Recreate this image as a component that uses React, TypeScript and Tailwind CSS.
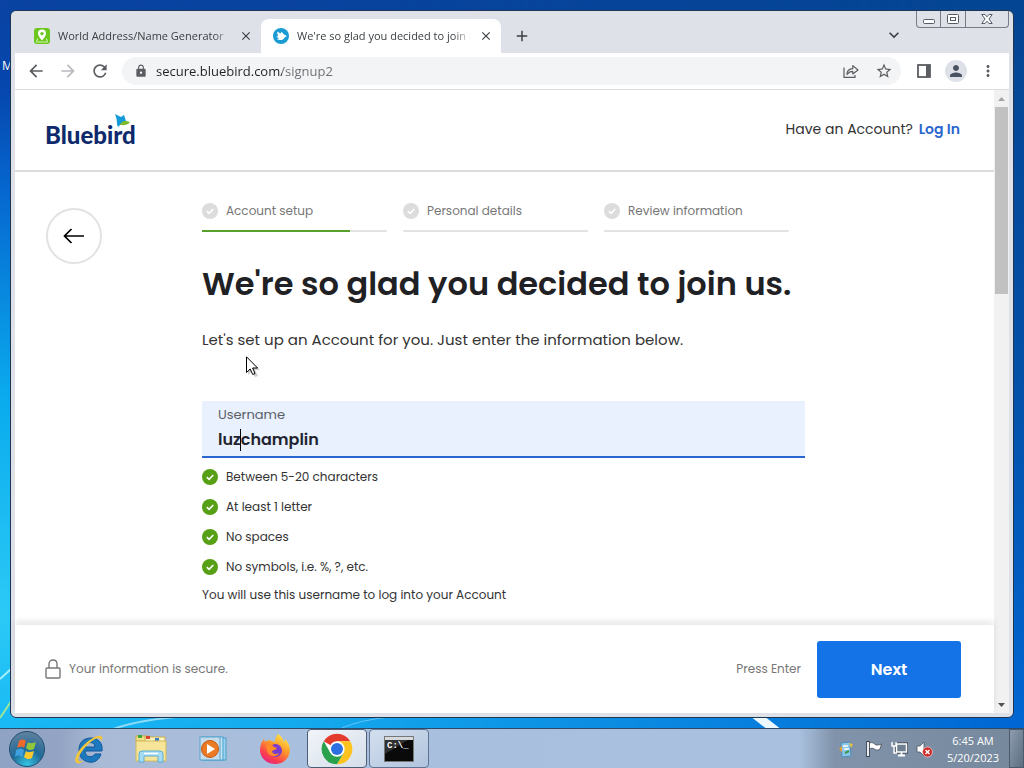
import React from 'react';
import {
  MdAdd,
  MdArrowBack,
  MdArrowForward,
  MdClose,
  MdKeyboardArrowDown,
  MdLock,
  MdMoreVert,
  MdPerson,
  MdRefresh,
  MdStarBorder,
} from 'react-icons/md';

const RULES = [
  'Between 5-20 characters',
  'At least 1 letter',
  'No spaces',
  'No symbols, i.e. %, ?, etc.',
];

const STEPS = [
  { label: 'Account setup', progress: 80 },
  { label: 'Personal details', progress: 0 },
  { label: 'Review information', progress: 0 },
];

const Wallpaper: React.FC = () => (
  <svg
    className="absolute inset-0 w-full h-full"
    viewBox="0 0 1024 768"
    preserveAspectRatio="none"
    aria-hidden="true"
  >
    <defs>
      <linearGradient id="skyLeft" x1="0" y1="0" x2="0" y2="1">
        <stop offset="0" stopColor="#0a43a2" />
        <stop offset="0.12" stopColor="#0648ae" />
        <stop offset="0.25" stopColor="#0668d0" />
        <stop offset="0.52" stopColor="#0bacee" />
        <stop offset="0.8" stopColor="#2ccaf6" />
        <stop offset="1" stopColor="#12b4f4" />
      </linearGradient>
      <linearGradient id="skyRight" x1="0" y1="0" x2="0" y2="1">
        <stop offset="0" stopColor="#044592" />
        <stop offset="0.5" stopColor="#0450a8" />
        <stop offset="1" stopColor="#0068d8" />
      </linearGradient>
      <linearGradient id="skyFade" x1="0" y1="0" x2="1" y2="0">
        <stop offset="0" stopColor="#000" />
        <stop offset="0.3" stopColor="#333" />
        <stop offset="1" stopColor="#fff" />
      </linearGradient>
      <mask id="skyMask">
        <rect width="1024" height="768" fill="url(#skyFade)" />
      </mask>
    </defs>
    <rect width="1024" height="768" fill="url(#skyLeft)" />
    <rect width="1024" height="768" fill="url(#skyRight)" mask="url(#skyMask)" />
    <path d="M0 679 L12 668" stroke="#a8ecff" strokeWidth="2" />
    <path d="M0 718 L12 700" stroke="#9be89a" strokeWidth="2" />
    <path d="M110 730 Q140 719 190 716" stroke="#8fdcf8" strokeWidth="2" fill="none" />
    <path d="M342 728 Q360 720 390 717" stroke="#5fc4fb" strokeWidth="1" fill="none" />
    <path d="M750 716 L764 716 L782 730 L768 730 Z" fill="#eef8ff" />
  </svg>
);

const CheckBadge: React.FC<{ done?: boolean }> = ({ done }) => (
  <svg className="w-4 h-4 shrink-0" viewBox="0 0 16 16" aria-hidden="true">
    <circle cx="8" cy="8" r="8" fill={done ? '#57a016' : '#dcdcdc'} />
    <path d="M4.8 8.2 L7.1 10.3 L11.3 6" fill="none" stroke="#fff" strokeWidth="1.6" />
  </svg>
);

const PinFavicon: React.FC = () => (
  <svg className="w-4 h-4 shrink-0" viewBox="0 0 16 16" aria-hidden="true">
    <rect width="16" height="16" rx="3" fill="#6cc81e" />
    <path d="M3.5 10.5 L2.5 14 H13.5 L12.5 10.5" fill="none" stroke="#d9f5bd" strokeWidth="1" />
    <path d="M8 1.6a4 4 0 0 0-4 4c0 3 4 6.8 4 6.8s4-3.8 4-6.8a4 4 0 0 0-4-4z" fill="#fff" />
    <circle cx="8" cy="5.6" r="1.7" fill="#6cc81e" />
  </svg>
);

const BirdFavicon: React.FC = () => (
  <svg className="w-4 h-4 shrink-0" viewBox="0 0 16 16" aria-hidden="true">
    <circle cx="8" cy="8" r="8" fill="#1a9bd4" />
    <path d="M4 3.4 L7.5 5.6 L8.6 3.8 L11 6.4 L14 8 L11.8 9.2 C11 11.8 8 12.6 4 11.6 L6 10 L3.2 9 L5 8 Z" fill="#fff" />
  </svg>
);

interface TabProps {
  title: string;
  icon: React.ReactNode;
  active?: boolean;
}

const Tab: React.FC<TabProps> = ({ title, icon, active }) => (
  <div
    className={
      active
        ? 'flex items-center w-60 h-[34px] pl-3 pr-2 rounded-t-lg bg-white'
        : 'flex items-center w-[246px] h-[34px] pl-[19px] pr-2'
    }
  >
    {icon}
    <button
      role="tab"
      aria-selected={!!active}
      className="flex-1 min-w-0 ml-2 mr-2 whitespace-nowrap text-left text-[11px] leading-4 text-[#3c4043] mask-r-from-90% mask-r-to-100%"
    >
      {title}
    </button>
    <button aria-label="Close tab" className="text-[#3c4043]">
      <MdClose size={14} />
    </button>
  </div>
);

const CaptionButtons: React.FC = () => (
  <div className="flex self-start h-[17px] border border-t-0 border-[#767c88] rounded-b-sm text-[#555c68]">
    <button aria-label="Minimize" className="flex items-center justify-center w-6 border-r border-[#767c88]">
      <svg width="12" height="12" viewBox="0 0 12 12" fill="#fff" stroke="currentColor">
        <rect x="0.5" y="6.5" width="11" height="4" rx="1" />
      </svg>
    </button>
    <button aria-label="Maximize" className="flex items-center justify-center w-[25px] border-r border-[#767c88]">
      <svg width="12" height="12" viewBox="0 0 12 12" fill="#fff" stroke="currentColor">
        <rect x="0.5" y="1.5" width="11" height="9" rx="1" />
        <rect x="3.5" y="4.5" width="5" height="3" />
      </svg>
    </button>
    <button aria-label="Close" className="flex items-center justify-center w-[42px]">
      <svg width="12" height="12" viewBox="0 0 12 12" fill="#fff" stroke="currentColor">
        <path d="M.8 1.5h3.2l2 2.3 2-2.3h3.2L8 6l3.2 4.5H8L6 8.2l-2 2.3H.8L4 6z" />
      </svg>
    </button>
  </div>
);

const TabStrip: React.FC = () => (
  <div className="flex items-end h-[42px] shrink-0 bg-[#dee1e8]">
    <div className="flex" role="tablist">
      <Tab title="World Address/Name Generator" icon={<PinFavicon />} />
      <Tab title="We're so glad you decided to join us" icon={<BirdFavicon />} active />
    </div>
    <button aria-label="New tab" className="ml-3 mb-2 text-[#3c4043]">
      <MdAdd size={18} />
    </button>
    <button aria-label="Search tabs" className="ml-auto mr-3 mb-2 text-[#3c4043]">
      <MdKeyboardArrowDown size={20} />
    </button>
    <CaptionButtons />
  </div>
);

const Toolbar: React.FC = () => (
  <div className="flex items-center h-[37px] shrink-0 pl-[11px] pr-3 bg-white border-b border-[#dcdde0] text-[#5a5d61]">
    <div className="flex gap-3">
      <button aria-label="Back"><MdArrowBack size={20} /></button>
      <button aria-label="Forward" className="text-[#b9bbbe]"><MdArrowForward size={20} /></button>
      <button aria-label="Reload"><MdRefresh size={20} /></button>
    </div>
    <div className="flex flex-1 items-center h-7 ml-3 mr-2 pl-3 pr-2 rounded-full bg-[#f3f4f5]">
      <MdLock size={14} />
      <input
        aria-label="Address"
        defaultValue="secure.bluebird.com/signup2"
        className="flex-1 min-w-0 ml-2 pt-px text-[13px] text-transparent bg-clip-text bg-[linear-gradient(90deg,#202124_126px,#6a6d72_126px)] outline-none"
      />
      <button aria-label="Share" className="mr-4">
        <svg width="16" height="16" viewBox="0 0 16 16" fill="none" stroke="currentColor" strokeWidth="1.2">
          <path d="M1 4.500 V14.400 H12 V12" />
          <path d="M4 11.500 C4 7.500 6.500 5.800 9.800 5.600 V2.600 L15 7 L9.800 11 V8.300 C7 8.300 5.500 9.300 4 11.500 Z" strokeLinejoin="round" />
        </svg>
      </button>
      <button aria-label="Bookmark this page"><MdStarBorder size={18} /></button>
    </div>
    <button aria-label="Side panel" className="ml-2">
      <svg width="14" height="14" viewBox="0 0 14 14">
        <rect x="1" y="1" width="12" height="12" fill="#fff" stroke="currentColor" strokeWidth="1.8" />
        <rect x="9" y="1" width="4" height="12" fill="currentColor" />
      </svg>
    </button>
    <button aria-label="Profile" className="flex items-center justify-center w-[22px] h-[22px] ml-3.5 mr-3 rounded-full bg-[#dee1e8] text-[#4a5261]">
      <MdPerson size={18} />
    </button>
    <button aria-label="Menu"><MdMoreVert size={18} /></button>
  </div>
);

const SiteHeader: React.FC = () => (
  <header className="flex items-center justify-between h-[82px] shrink-0 pl-[30px] pr-[34px] border-b-2 border-[#dcdcdc]">
    <a href="#" className="relative pt-2.5 font-['Lato'] font-black text-2xl leading-8 text-[#0e2a6c]">
      Bluebird
      <svg className="absolute right-1 top-1 w-5 h-4" viewBox="0 0 20 16" aria-hidden="true">
        <path d="M3 1 L9 4 L12 2 L14 8 L8 12 L6 14 C4 10 6 8 3 1 Z" fill="#129bd8" />
        <path d="M8 12 C9 8 13 7 18 9 C16 12 12 12.500 8 12 Z" fill="#7fb92c" />
      </svg>
    </a>
    <p className="pb-0.5 text-sm text-[#333]">
      Have an Account? <a href="#" className="ml-0.5 font-semibold text-[#2a66cf]">Log In</a>
    </p>
  </header>
);

const Stepper: React.FC = () => (
  <ol className="flex">
    {STEPS.map((step) => (
      <li key={step.label} className="flex-1 pr-4">
        <div className="flex items-center gap-2 h-5 text-xs text-[#777]">
          <CheckBadge />
          {step.label}
        </div>
        <div className="h-0.5 mt-[9px] rounded-full bg-[#e2e2e2]">
          <div className="h-0.5 bg-[#57a02c]" style={{ width: `${step.progress}%` }} />
        </div>
      </li>
    ))}
  </ol>
);

const SignupForm: React.FC = () => (
  <form id="signup" className="w-full max-w-[603px]">
    <Stepper />
    <h1 className="mt-7 text-[32px] leading-12 font-semibold whitespace-nowrap text-[#1f2124]">
      We're so glad you decided to join us.
    </h1>
    <p className="mt-5 text-[15px] leading-6 text-[#333]">
      Let's set up an Account for you. Just enter the information below.
    </p>
    <div className="relative h-[57px] mt-[49px] px-4 pt-1 border-b-2 border-[#2a66cf] bg-[#e8f1fd]">
      <label htmlFor="username" className="block text-[13px] leading-5 text-[#5a6068]">Username</label>
      <input
        id="username"
        defaultValue="luzchamplin"
        className="block w-full h-7 bg-transparent text-base font-semibold text-[#1f2430] outline-none"
      />
      <span className="absolute left-[38px] top-7 w-px h-[22px] bg-black" />
    </div>
    <ul className="mt-1 text-xs text-[#333]">
      {RULES.map((rule) => (
        <li key={rule} className="flex items-center gap-2 h-[30px]">
          <CheckBadge done />
          {rule}
        </li>
      ))}
    </ul>
    <p className="mt-[3px] text-xs leading-5 text-[#333]">
      You will use this username to log into your Account
    </p>
  </form>
);

const SiteFooter: React.FC = () => (
  <footer className="relative flex items-center h-[88px] shrink-0 pl-[30px] pr-[33px] bg-white shadow-[0_-4px_6px_rgba(0,0,0,0.09)] text-xs text-[#777]">
    <svg className="mr-2" width="16" height="20" viewBox="0 0 16 20" fill="none" stroke="#777" strokeWidth="1.4" aria-hidden="true">
      <rect x="1" y="9" width="14" height="10" rx="1" />
      <path d="M4 9 V5 C4 -0.300 12 -0.300 12 5 V9" />
    </svg>
    Your information is secure.
    <span className="ml-auto mr-4">Press Enter</span>
    <button type="submit" form="signup" className="w-36 h-[57px] pt-px rounded-[3px] bg-[#1473e6] text-base font-semibold text-white">
      Next
    </button>
  </footer>
);

const Scrollbar: React.FC = () => (
  <div className="flex flex-col w-[15px] shrink-0 items-center bg-[#f1f1f1]" aria-hidden="true">
    <svg width="15" height="17" viewBox="0 0 15 17">
      <path d="M4 11 L7.500 7 L11 11 Z" fill="#a3a3a3" />
    </svg>
    <div className="w-[13px] h-[30%] bg-[#c1c1c1]" />
    <svg className="mt-auto" width="15" height="17" viewBox="0 0 15 17">
      <path d="M4 7 L7.500 11 L11 7 Z" fill="#505050" />
    </svg>
  </div>
);

const SignupPage: React.FC = () => (
  <div className="flex flex-1 min-h-0 bg-white">
    <div className="flex flex-col flex-1 min-w-0 font-['Poppins','Inter',sans-serif]">
      <SiteHeader />
      <main className="flex flex-1 min-h-0 pt-[29px] pl-[31px] gap-[100px] overflow-hidden">
        <button aria-label="Go back" className="flex items-center justify-center w-14 h-14 mt-[7px] shrink-0 rounded-full border-2 border-[#e2e2e2]">
          <svg width="22" height="16" viewBox="0 0 22 16" fill="none" stroke="#000" strokeWidth="1.7">
            <path d="M21 8 H1.500 M8.500 1 L1.500 8 L8.500 15" />
          </svg>
        </button>
        <SignupForm />
      </main>
      <SiteFooter />
    </div>
    <Scrollbar />
  </div>
);

const ChromeLogo: React.FC = () => (
  <svg width="32" height="32" viewBox="0 0 48 48" aria-hidden="true">
    <circle cx="24" cy="24" r="23" fill="#fff" />
    <path d="M24 24 L4.080 12.500 A23 23 0 0 1 43.920 12.500 H24 Z" fill="#e33b2e" />
    <path d="M43.920 12.500 A23 23 0 0 1 24 47 L33.960 29.750 L24 12.500 Z" fill="#fcc31e" />
    <path d="M4.080 12.500 A23 23 0 0 0 24 47 L33.960 29.750 L24 24 L14.040 29.750 Z" fill="#2aa14c" />
    <circle cx="24" cy="24" r="11.500" fill="#fff" />
    <circle cx="24" cy="24" r="9" fill="#2c6fe0" />
  </svg>
);

const FirefoxLogo: React.FC = () => (
  <svg width="32" height="32" viewBox="0 0 32 32" aria-hidden="true">
    <defs>
      <linearGradient id="fox" x1="0.8" y1="0" x2="0.2" y2="1">
        <stop offset="0" stopColor="#fff04a" />
        <stop offset="0.4" stopColor="#ff9a2a" />
        <stop offset="0.75" stopColor="#fb3f4e" />
        <stop offset="1" stopColor="#e0208a" />
      </linearGradient>
    </defs>
    <path d="M19 1 C23 4 24 6 25 9 C26 8 26 7 26 6 C31 11 32 17 30 22 C27 29 21 31 16 31 C8 31 1 25 1 17 C1 12 3 8 5 6 L6 9 C7 8 9 7 10 7 C12 8 14 8 16 9 C16 6 17 3 19 1 Z" fill="url(#fox)" />
    <circle cx="16.500" cy="17.500" r="6.500" fill="#7a3bd0" />
    <path d="M7 12 C10 10 13 11 15 14 L18 15 C17 17 14 17 13 18 C13 21 17 22 20 20 C18 25 10 24 8 18 Z" fill="#ff8a2a" />
  </svg>
);

const ExplorerLogo: React.FC = () => (
  <svg width="32" height="30" viewBox="0 0 32 30" aria-hidden="true">
    <rect x="1" y="2" width="12" height="5" fill="#f2df86" stroke="#c9ad4e" />
    <rect x="10" y="3" width="20" height="5" fill="#fbf2c0" stroke="#c9ad4e" />
    <rect x="3" y="1" width="4" height="3" fill="#3ba53a" />
    <rect x="11" y="2" width="4" height="3" fill="#d9462c" />
    <rect x="20" y="4" width="4" height="3" fill="#3d80c4" />
    <path d="M1 7 H31 V27 H1 Z" fill="#f6e598" stroke="#d2b85c" />
    <path d="M4 28 V20 Q4 17 7 17 H25 Q28 17 28 20 V28 H23 V22 H9 V28 Z" fill="#a5dcf3" stroke="#5cacd4" />
    <path d="M9 19.500 H23" stroke="#fff" strokeWidth="1.500" />
  </svg>
);

const InternetExplorerLogo: React.FC = () => (
  <svg width="32" height="32" viewBox="0 0 32 32" aria-hidden="true">
    <path d="M29 18 H12 C12 25 20 25 22 21 H28 C26 28 20 30 16 29 C9 28 6 23 6 17 C6 9 11 5 18 5 C26 5 30 11 29 18 Z M12 14 H22 C22 8 13 8 12 14 Z" fill="#1c78bf" fillRule="evenodd" stroke="#125996" />
    <path d="M4 30 C-1 28 5 17 13 10 C20 4 27 1 29 4 C30 6 29 7 28 8 C28 5 25 4 19 8 C11 14 3 25 6 28 C7 29 9 28 11 27 C8 30 6 31 4 30 Z" fill="#f2c53a" />
  </svg>
);

const MediaPlayerLogo: React.FC = () => (
  <svg width="28" height="28" viewBox="0 0 28 28" aria-hidden="true">
    <rect x="5" y="3" width="22" height="22" fill="#9cd3ee" stroke="#4b9fcb" />
    <rect x="3" y="2" width="21" height="23" fill="#bfe3f4" stroke="#4b9fcb" />
    <rect x="1" y="2" width="20" height="23" fill="#c6dcec" stroke="#5ba5cc" />
    <circle cx="11" cy="14" r="8.500" fill="#ec7a24" stroke="#c55b12" />
    <path d="M8 9 L16 14 L8 19 Z" fill="#fff" />
  </svg>
);

const CommandPromptLogo: React.FC = () => (
  <svg width="30" height="26" viewBox="0 0 30 26" aria-hidden="true">
    <rect x="0.500" y="0.500" width="29" height="25" fill="#0a0a0a" stroke="#777" />
    <rect x="1" y="1" width="28" height="3" fill="#d5d9de" />
    <path d="M1 4 H24 L1 18 Z" fill="#303030" />
    <text x="3" y="12" fontSize="9" fontWeight="bold" fontFamily="Liberation Mono, monospace" fill="#fff">C:\_</text>
  </svg>
);

const StartOrb: React.FC = () => (
  <svg width="38" height="38" viewBox="0 0 38 38" aria-hidden="true">
    <defs>
      <radialGradient id="orb" cx="0.5" cy="0.95" r="0.9">
        <stop offset="0" stopColor="#35c6e6" />
        <stop offset="0.5" stopColor="#1f6a98" />
        <stop offset="1" stopColor="#5d7f9e" />
      </radialGradient>
    </defs>
    <circle cx="19" cy="19" r="17.500" fill="url(#orb)" stroke="#23506f" />
    <path d="M11 11 C13 9 16 9 18 11 L16 18 C14 16 11 17 9 18 Z" fill="#ee6a2c" />
    <path d="M20 12 C22 14 26 13 28 12 L26 19 C23 21 20 20 18 18 Z" fill="#8fc63c" />
    <path d="M8 20 C11 18 14 18 16 20 L14 27 C12 25 9 25 7 27 Z" fill="#3fa0e0" />
    <path d="M18 21 C20 23 23 22 26 21 L24 28 C21 30 18 29 16 27 Z" fill="#fbc92e" />
  </svg>
);

const TASKS = [
  { name: 'Internet Explorer', logo: <InternetExplorerLogo /> },
  { name: 'Windows Explorer', logo: <ExplorerLogo /> },
  { name: 'Windows Media Player', logo: <MediaPlayerLogo /> },
  { name: 'Firefox', logo: <FirefoxLogo /> },
  { name: 'Google Chrome', logo: <ChromeLogo />, state: 'active' },
  { name: 'Command Prompt', logo: <CommandPromptLogo />, state: 'open' },
];

const taskStyle = (state?: string) => {
  if (state === 'active') {
    return 'flex items-center justify-center w-[60px] h-full rounded-sm border border-[#4d5d75] bg-linear-to-br from-[#f2f5f9] to-[#d5deea]';
  }
  if (state === 'open') {
    return 'flex items-center justify-center w-[60px] h-full rounded-sm border border-[#5f7390] bg-linear-to-br from-[#d3dfee] to-[#b1c4de]';
  }
  return 'flex items-center justify-center w-[60px] h-full';
};

const Tray: React.FC = () => (
  <div className="flex items-center gap-2 text-white">
    <svg width="16" height="18" viewBox="0 0 16 18" aria-hidden="true">
      <path d="M3 3 L12 2 L13 16 L4 17 Z" fill="#8cc6e8" stroke="#4d8fbd" />
      <path d="M1 9 L4 6 V12 Z" fill="#e8a030" />
      <path d="M11 3 L15 4 L13 8 Z" fill="#e8c040" />
      <path d="M5 6 H10 M6 9 H11" stroke="#fff" strokeWidth="1.500" />
      <path d="M7 13 L11 11" stroke="#3a9a50" strokeWidth="2" />
    </svg>
    <svg className="ml-1" width="17" height="18" viewBox="0 0 17 18" aria-hidden="true">
      <path d="M2 1 V17" stroke="#333c48" strokeWidth="3.500" />
      <path d="M2 2 V16" stroke="#fff" strokeWidth="1.800" />
      <path d="M3.500 3 C6 2 8 3 9 4.500 C11 5.500 13 5 15.500 4 L14 9 C12 10.500 10 10.500 8.500 9 C7 8 5 8 3.500 9 Z" fill="#fff" stroke="#333c48" strokeWidth="0.700" />
    </svg>
    <svg width="17" height="18" viewBox="0 0 17 18" fill="none" stroke="#fff" aria-hidden="true">
      <rect x="5.500" y="4" width="10" height="8" stroke="#333c48" strokeWidth="3" />
      <rect x="5.500" y="4" width="10" height="8" fill="#6e7f92" strokeWidth="1.500" />
      <path d="M7 15.500 H14 M10.500 12 V15" strokeWidth="1.800" />
      <path d="M1 2 V6 H5 V2 M3 6 V13 H6" strokeWidth="1.400" />
    </svg>
    <svg width="17" height="18" viewBox="0 0 17 18" aria-hidden="true">
      <path d="M1 6 H4 L8 2 V16 L4 12 H1 Z" fill="#fff" stroke="#4a5563" strokeWidth="0.800" />
      <circle cx="11.500" cy="12" r="5" fill="#cf2a2a" stroke="#f3d5d5" strokeWidth="0.700" />
      <path d="M9.500 10 L13.500 14 M13.500 10 L9.500 14" stroke="#fff" strokeWidth="1.500" />
    </svg>
  </div>
);

const Taskbar: React.FC = () => (
  <div className="relative flex items-center h-10 shrink-0 border-t border-[#2c4a68] bg-[linear-gradient(90deg,#8fa3c4_0,#93a4c4_60px,#a9bad6_100px,#a8c0de_300px,#a9c1df_calc(100%-225px),#8093aa_calc(100%-190px),#76889c_100%)]">
    <button aria-label="Start" className="flex items-center justify-center w-[51px] ml-px mr-[7px]">
      <StartOrb />
    </button>
    <div className="flex gap-0.5 h-full">
      {TASKS.map((task) => (
        <button key={task.name} aria-label={task.name} className={taskStyle(task.state)}>
          {task.logo}
        </button>
      ))}
    </div>
    <div className="flex items-center h-full ml-auto">
      <Tray />
      <div className="w-[72px] ml-1 text-center text-[11px] leading-[17px] text-white">
        <div>6:45 AM</div>
        <div>5/20/2023</div>
      </div>
      <button aria-label="Show desktop" className="w-[15px] h-full border border-[#4b5a6c] bg-linear-to-br from-[#8d9cae] to-[#5d6e82]" />
    </div>
  </div>
);

const Cursor: React.FC = () => (
  <svg className="absolute left-[246px] top-[356px]" width="14" height="21" viewBox="0 0 14 21" aria-hidden="true">
    <path d="M2 3 V19 L6 15 L9 21 L12 20 L9 14 H14 Z" fill="#000" opacity="0.2" />
    <path d="M0.500 0.800 V16.500 L4.200 13 L6.700 18.500 L9 17.500 L6.600 12 H11.600 Z" fill="#fff" stroke="#000" />
  </svg>
);

export default function App() {
  return (
    <div className="relative flex flex-col h-screen overflow-hidden font-['Segoe_UI','Open_Sans',sans-serif]">
      <Wallpaper />
      <span className="absolute left-0.5 top-[58px] text-xs leading-4 text-white text-shadow-sm">M</span>
      <div className="relative flex flex-col flex-1 min-h-0 p-2.5">
        <div className="flex flex-col flex-1 min-h-0 px-1 pb-1 overflow-hidden rounded-md border border-[#1d3654] bg-[#dee1e8]">
          <TabStrip />
          <Toolbar />
          <SignupPage />
        </div>
      </div>
      <Taskbar />
      <Cursor />
    </div>
  );
}
